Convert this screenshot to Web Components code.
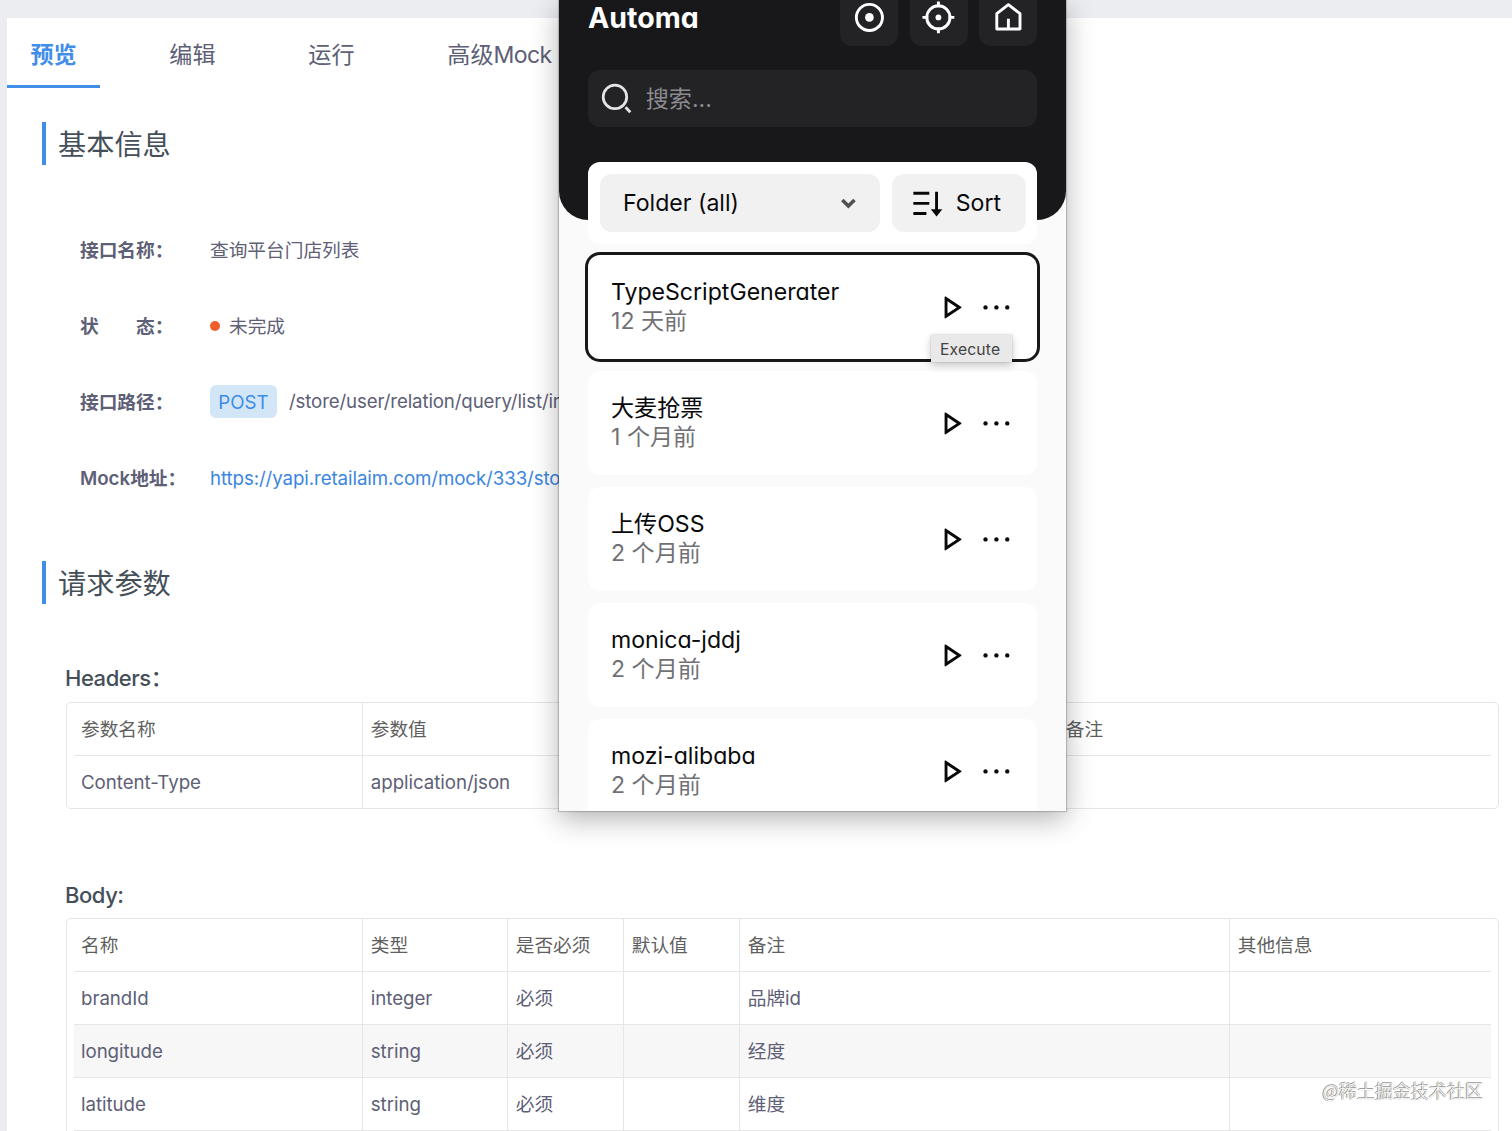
<!DOCTYPE html>
<html lang="zh-CN">
<head>
<meta charset="UTF-8">
<title>YApi - Automa</title>
<style>
  html, body {
    margin: 0;
    height: 1131px;
    overflow: hidden;
    background: #ecedf1;
  }

  body {
    position: relative;
    font-family: Inter, "Noto Sans CJK SC", sans-serif;
    font-size: 18.7px;
    color: #5d6076;
  }
</style>
</head>
<body>
  <api-page>
    <tab-bar slot="tabs">
      <tab-item active>预览</tab-item>
      <tab-item>编辑</tab-item>
      <tab-item>运行</tab-item>
      <tab-item>高级<span style="letter-spacing: -.6px">Mock</span></tab-item>
    </tab-bar>

    <section-title>基本信息</section-title>
    <field-list>
      <field-row label="接口名称：">查询平台门店列表</field-row>
      <field-row label="状　　态："><status-dot>未完成</status-dot></field-row>
      <field-row label="接口路径："><method-path method="POST">/store/user/relation/query/list/in</method-path></field-row>
      <field-row label="Mock地址：" link>https://yapi.retailaim.com/mock/333/sto</field-row>
    </field-list>

    <section-title>请求参数</section-title>
    <param-table id="headers" heading="Headers：" columns="289px 695px 1fr"></param-table>
    <param-table id="body" heading="Body:" columns="289px 145px 116px 116px 490px 1fr"></param-table>
  </api-page>

  <automa-popup>
    <popup-header slot="header"></popup-header>
    <popup-toolbar slot="toolbar"></popup-toolbar>
    <workflow-card name="TypeScriptGenerater" time="12 天前" selected>
      <tool-tip>Execute</tool-tip>
    </workflow-card>
    <workflow-card name="大麦抢票" time="1 个月前"></workflow-card>
    <workflow-card name="上传OSS" time="2 个月前"></workflow-card>
    <workflow-card name="monica-jddj" time="2 个月前"></workflow-card>
    <workflow-card name="mozi-alibaba" time="2 个月前"></workflow-card>
  </automa-popup>

  <water-mark>@稀土掘金技术社区</water-mark>

<script>
// small helper: attach an open root and fill it
class BaseElement extends HTMLElement {
  constructor() {
    super();
    this.attachShadow({ mode: 'open' });
  }

  connectedCallback() {
    this.shadowRoot.innerHTML = this.template();
  }
}

/* ---------- API page ---------- */

class ApiPage extends BaseElement {
  template() {
    return `
      <style>
        :host {
          display: block;
          box-sizing: border-box;
          height: 1131px;
          overflow: hidden;
          padding: 18px 0 0 7px;
          background: #ecedf1;
        }
        .panel {
          height: 100%;
          background: #fff;
        }
        .content {
          padding: 34px 13px 0 35px;
        }
      </style>
      <div class="panel">
        <slot name="tabs"></slot>
        <div class="content"><slot></slot></div>
      </div>
    `;
  }
}

class TabBar extends BaseElement {
  template() {
    return `
      <style>
        :host {
          display: flex;
          gap: 46px;
          height: 70px;
        }
      </style>
      <slot></slot>
    `;
  }
}

class TabItem extends BaseElement {
  template() {
    return `
      <style>
        :host {
          display: block;
          box-sizing: border-box;
          height: 70px;
          padding: 0 23.4px;
          border-bottom: 3px solid transparent;
          font-size: 23.1px;
          line-height: 74px;
          white-space: nowrap;
        }
        :host([active]) {
          color: #418ee9;
          font-weight: 600;
          border-color: #418ee9;
        }
      </style>
      <slot></slot>
    `;
  }
}

class SectionTitle extends BaseElement {
  template() {
    return `
      <style>
        :host {
          display: block;
          height: 43px;
          padding-left: 12px;
          border-left: 4px solid #418ee9;
          color: #454f59;
          font-size: 28.2px;
          line-height: 47px;
        }
      </style>
      <slot></slot>
    `;
  }
}

class FieldList extends BaseElement {
  template() {
    return `
      <style>
        :host {
          display: grid;
          grid-template-rows: 78px 74px 77px 76px;
          padding: 46px 0 45px 38px;
        }
      </style>
      <slot></slot>
    `;
  }
}

class FieldRow extends BaseElement {
  template() {
    return `
      <style>
        :host {
          display: grid;
          grid-template-columns: 130px 1fr;
          align-items: center;
          line-height: 29px;
          white-space: nowrap;
        }
        .label {
          height: 28px;
          font-weight: 600;
        }
        .value {
          height: 28px;
        }
        :host([link]) .value {
          color: #3b86e0;
          letter-spacing: -.09px;
        }
      </style>
      <span class="label">${this.getAttribute('label')}</span>
      <span class="value"><slot></slot></span>
    `;
  }
}

class StatusDot extends BaseElement {
  template() {
    return `
      <style>
        :host {
          display: flex;
          align-items: center;
          gap: 9px;
          height: 28px;
        }
        i {
          width: 10px;
          height: 10px;
          border-radius: 50%;
          background: #ee5f2d;
        }
      </style>
      <i></i><slot></slot>
    `;
  }
}

class MethodPath extends BaseElement {
  template() {
    return `
      <style>
        :host {
          display: flex;
          align-items: center;
          gap: 12px;
          height: 28px;
          line-height: 27px;
        }
        .method {
          width: 67px;
          height: 33px;
          border-radius: 6px;
          background: #d3e6f8;
          color: #3b8ce6;
          line-height: 35px;
          text-align: center;
        }
        .path {
          letter-spacing: -.14px;
        }
      </style>
      <span class="method">${this.getAttribute('method')}</span>
      <span class="path"><slot></slot></span>
    `;
  }
}

const TABLE_ROWS = {
  headers: [
    ['参数名称', '参数值', '备注'],
    ['Content-Type', 'application/json', ''],
  ],
  body: [
    ['名称', '类型', '是否必须', '默认值', '备注', '其他信息'],
    ['brandId', 'integer', '必须', '', '品牌id', ''],
    ['longitude', 'string', '必须', '', '经度', ''],
    ['latitude', 'string', '必须', '', '维度', ''],
    ['', '', '', '', '', ''],
  ],
};

class ParamTable extends BaseElement {
  template() {
    const rows = TABLE_ROWS[this.id].map(cells => `
      <div class="row">${cells.map(c => `<span>${c}</span>`).join('')}</div>
    `).join('');

    return `
      <style>
        :host {
          display: block;
          margin-left: 24px;
        }
        :host(#headers) {
          padding-top: 59px;
          margin-bottom: 70px;
        }
        h3 {
          margin: 0 0 9px -1px;
          height: 30px;
          color: #454f59;
          font-size: 22px;
          font-weight: 550;
          line-height: 30px;
          letter-spacing: -.45px;
        }
        :host(#body) h3 {
          line-height: 32px;
        }
        .table {
          padding: 0 7px;
          border: 1px solid #e6e6e7;
          border-radius: 5px;
        }
        .row {
          display: grid;
          grid-template-columns: ${this.getAttribute('columns')};
          height: 52px;
          border-bottom: 1px solid #e6e6e7;
          line-height: 53px;
          letter-spacing: -.05px;
        }
        .row:last-child {
          border-bottom: 0;
        }
        .row:first-child {
          color: #5f5f61;
        }
        .row:nth-child(3) {
          background: #f7f7f7;
        }
        span {
          padding-left: 7.8px;
          border-right: 1px solid #e6e6e7;
          white-space: nowrap;
        }
        span:first-child {
          padding-left: 7px;
        }
        span:last-child, :host(#headers) span:nth-child(2) {
          border-right: 0;
        }
      </style>
      <h3>${this.getAttribute('heading')}</h3>
      <div class="table">${rows}</div>
    `;
  }
}

/* ---------- Automa popup ---------- */

const ICONS = {
  record: '<circle cx="12" cy="12" r="9" fill="none" stroke="currentColor" stroke-width="2"/><circle cx="12" cy="12" r="3"/>',
  focus: '<circle cx="12" cy="12" r="8" fill="none" stroke="currentColor" stroke-width="2"/><circle cx="12" cy="12" r="2"/><path d="M11 1h2v4h-2zM11 19h2v4h-2zM1 11h4v2H1zM19 11h4v2h-4z"/>',
  home: '<path d="M4 20V9.4L12 3.2l8 6.2V20zM12 13v7" fill="none" stroke="currentColor" stroke-width="2" stroke-linejoin="round"/>',
  search: '<circle cx="11" cy="11" r="8.1" fill="none" stroke="currentColor" stroke-width="1.9"/><path d="M18.3 18.1l3.3 3.4" stroke="currentColor" stroke-width="2"/>',
  sort: '<path d="M20 4v12h3l-4 5-4-5h3V4h2zm-8 14v2H3v-2h9zm2-7v2H3v-2h11zm0-7v2H3V4h11z"/>',
  play: '<path d="M16.394 12L10 7.737v8.526L16.394 12zm2.982.416L8.777 19.482A.5.5 0 0 1 8 19.066V4.934a.5.5 0 0 1 .777-.416l10.599 7.066a.5.5 0 0 1 0 .832z"/>',
  more: '<circle cx="4.5" cy="12" r="1.5"/><circle cx="12" cy="12" r="1.5"/><circle cx="19.5" cy="12" r="1.5"/>',
  chevron: '<path d="M7.8 9.6l4.2 4.2 4.2-4.2" fill="none" stroke="currentColor" stroke-width="2.4"/>',
};

class RiIcon extends BaseElement {
  template() {
    return `
      <style>
        :host {
          display: block;
          width: 34.8px;
          height: 34.8px;
          flex-shrink: 0;
        }
        svg {
          display: block;
          width: 100%;
          height: 100%;
          fill: currentColor;
        }
      </style>
      <svg viewBox="0 0 24 24">${ICONS[this.getAttribute('name')]}</svg>
    `;
  }
}

class AutomaPopup extends BaseElement {
  template() {
    return `
      <style>
        :host {
          display: block;
          position: absolute;
          left: 559px;
          top: 0;
          width: 507px;
          height: 811px;
          overflow: hidden;
          background: #fafafa;
          color: #09090b;
          font-size: 23.1px;
          box-shadow: 0 0 1px 1px rgba(0,0,0,.18), 0 8px 26px rgba(0,0,0,.3);
        }
        .list {
          display: flex;
          flex-direction: column;
          gap: 12px;
          padding: 11px 29px 0;
        }
      </style>
      <slot name="header"></slot>
      <slot name="toolbar"></slot>
      <div class="list"><slot></slot></div>
    `;
  }
}

class PopupHeader extends BaseElement {
  template() {
    return `
      <style>
        :host {
          display: block;
          box-sizing: border-box;
          height: 220px;
          padding: 0 29px;
          border-radius: 0 0 29px 29px;
          background: #18181b;
          color: #fff;
        }
        .top {
          display: flex;
          align-items: flex-start;
          gap: 11.5px;
          height: 46px;
        }
        h1 {
          flex: 1;
          margin: 0;
          font-size: 28.5px;
          font-weight: 700;
          line-height: 35px;
          font-feature-settings: "cv11";
        }
        .btn {
          display: flex;
          justify-content: center;
          width: 58px;
          height: 46px;
          border-radius: 0 0 12px 12px;
          background: #232326;
        }
        .search {
          display: flex;
          align-items: center;
          gap: 11.6px;
          margin-top: 24px;
          height: 57px;
          padding-left: 11.4px;
          border-radius: 12px;
          background: #232326;
          color: #8b8b90;
          line-height: 58px;
        }
        .search span {
          height: 57px;
        }
        .search ri-icon {
          color: #e4e4e7;
        }
      </style>
      <div class="top">
        <h1>Automa</h1>
        <div class="btn"><ri-icon name="record"></ri-icon></div>
        <div class="btn"><ri-icon name="focus"></ri-icon></div>
        <div class="btn"><ri-icon name="home"></ri-icon></div>
      </div>
      <div class="search"><ri-icon name="search"></ri-icon><span>搜索...</span></div>
    `;
  }
}

class PopupToolbar extends BaseElement {
  template() {
    return `
      <style>
        /* pulled up so that it overlaps the dark header */
        :host {
          display: flex;
          gap: 12px;
          margin: -58px 29px 0;
          box-sizing: border-box;
          height: 82px;
          padding: 12px 11.5px 12px 12px;
          border-radius: 12px;
          background: #fff;
        }
        .select, .sort {
          display: flex;
          align-items: center;
          box-sizing: border-box;
          border-radius: 12px;
          background: #f1f1f1;
        }
        .select {
          flex: 1;
          justify-content: space-between;
          padding: 0 14px 0 23px;
        }
        .select ri-icon {
          color: #505052;
        }
        .sort {
          gap: 12px;
          width: 133.5px;
          padding-left: 17px;
        }
      </style>
      <div class="select">Folder (all)<ri-icon name="chevron"></ri-icon></div>
      <div class="sort"><ri-icon name="sort"></ri-icon>Sort</div>
    `;
  }
}

class WorkflowCard extends BaseElement {
  template() {
    return `
      <style>
        :host {
          display: flex;
          align-items: center;
          gap: 11.5px;
          position: relative;
          box-sizing: border-box;
          height: 104px;
          flex-shrink: 0;
          padding: 0 22.8px 0 23px;
          border-radius: 12px;
          background: #fff;
          line-height: 29px;
          font-feature-settings: "cv11";
        }
        :host([selected]) {
          box-shadow: 0 0 0 3px #18181b;
        }
        .text {
          flex: 1;
        }
        .text div {
          height: 29px;
          white-space: nowrap;
        }
        .time {
          color: #717175;
        }
      </style>
      <div class="text">
        <div>${this.getAttribute('name')}</div>
        <div class="time">${this.getAttribute('time')}</div>
      </div>
      <ri-icon name="play"></ri-icon>
      <ri-icon name="more"></ri-icon>
      <slot></slot>
    `;
  }
}

class ToolTip extends BaseElement {
  template() {
    return `
      <style>
        :host {
          display: block;
          position: absolute;
          right: 25px;
          top: 80px;
          width: 81px;
          height: 27px;
          background: #e9e9e9;
          box-shadow: 0 0 1px rgba(0,0,0,.35), 0 3px 9px rgba(0,0,0,.22);
          color: #434343;
          font-size: 15.7px;
          line-height: 29px;
          text-indent: 9px;
          letter-spacing: .15px;
          font-feature-settings: normal;
          z-index: 1;
        }
      </style>
      <slot></slot>
    `;
  }
}

class WaterMark extends BaseElement {
  template() {
    return `
      <style>
        :host {
          display: block;
          position: absolute;
          right: 29px;
          bottom: 27px;
          color: #fff;
          font-family: "Noto Sans CJK SC", sans-serif;
          font-size: 18px;
          font-weight: 300;
          line-height: 28px;
          text-shadow: -1px 0 0 #8a8a8a, 0 -1px 0 #9c9c9c, 0 0 1px #777;
        }
      </style>
      <slot></slot>
    `;
  }
}

customElements.define('ri-icon', RiIcon);
customElements.define('api-page', ApiPage);
customElements.define('tab-bar', TabBar);
customElements.define('tab-item', TabItem);
customElements.define('section-title', SectionTitle);
customElements.define('field-list', FieldList);
customElements.define('field-row', FieldRow);
customElements.define('status-dot', StatusDot);
customElements.define('method-path', MethodPath);
customElements.define('param-table', ParamTable);
customElements.define('automa-popup', AutomaPopup);
customElements.define('popup-header', PopupHeader);
customElements.define('popup-toolbar', PopupToolbar);
customElements.define('workflow-card', WorkflowCard);
customElements.define('tool-tip', ToolTip);
customElements.define('water-mark', WaterMark);
</script>
</body>
</html>
